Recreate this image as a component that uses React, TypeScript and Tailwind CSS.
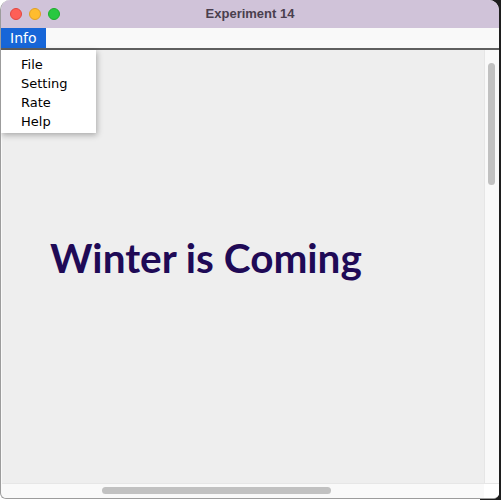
import React from 'react';

const menuItems = ['File', 'Setting', 'Rate', 'Help'];

const TrafficLights: React.FC = () => (
  <div className="flex items-center gap-[7px] pl-[9px]">
    <span className="w-[12px] h-[12px] rounded-full bg-[#fe5f57] border border-[#e2463f]" />
    <span className="w-[12px] h-[12px] rounded-full bg-[#febc2e] border border-[#dfa023]" />
    <span className="w-[12px] h-[12px] rounded-full bg-[#28c840] border border-[#1dad2b]" />
  </div>
);

const App: React.FC = () => {
  return (
    <div className="w-[501px] h-[500px] flex bg-[linear-gradient(to_right,#ffffff_480px,#1e1e1e_480px)] font-['Liberation_Sans',sans-serif]">
      <div className="relative w-[499px] h-[499px] flex flex-col rounded-t-[10px] rounded-b-[6px] overflow-hidden border-l border-b border-[#9c9c9c] bg-[#f9f9f9]">
        {/* title bar */}
        <div className="relative h-[28px] shrink-0 bg-[#d0c3d9] flex items-center">
          <TrafficLights />
          <span className="absolute left-0 right-0 text-center text-[13px] font-bold text-[#4a3f4e]">
            Experiment 14
          </span>
        </div>

        {/* menu bar */}
        <div className="h-[22px] shrink-0 flex bg-[#f9f9f9] border-b-2 border-[#5f5f5f]">
          <div className="w-[45px] bg-[#1766d8] text-white text-[14px] pl-[9px] leading-[20px] font-['DejaVu_Sans',sans-serif]">
            Info
          </div>
        </div>

        {/* scroll pane */}
        <div className="flex-1 flex flex-col min-h-0 pl-[1px]">
          <div className="flex-1 flex min-h-0">
            <div className="flex-1 bg-[#eeeeee] pl-[48px] pt-[184px]">
              <h1 className="text-[40.5px] font-bold text-[#1f0a56] font-['Lato',sans-serif] leading-[48px]">
                Winter is Coming
              </h1>
            </div>
            <div className="w-[15px] bg-[#f9f9f9] border-l border-[#e6e6e6] pt-[13px] pl-[3px]">
              <div className="w-[7px] h-[122px] rounded-full bg-[#c1c1c1]" />
            </div>
          </div>
          <div className="h-[15px] shrink-0 flex border-t border-[#e6e6e6] bg-[#f9f9f9]">
            <div className="flex-1 pt-[3px] pl-[100px]">
              <div className="w-[229px] h-[7px] rounded-full bg-[#c1c1c1]" />
            </div>
            <div className="w-[15px] bg-white" />
          </div>
        </div>

        {/* dropdown */}
        <div className="absolute top-[50px] left-0 w-[95px] h-[83px] bg-white shadow-[1px_2px_6px_rgba(0,0,0,0.3)] pt-[5px] pl-[20px] font-['DejaVu_Sans',sans-serif] text-[13px] leading-[19px] text-black">
          {menuItems.map((item) => (
            <div key={item}>{item}</div>
          ))}
        </div>
      </div>
      <div className="w-[2px] bg-[#1e1e1e]" />
    </div>
  );
};

export default App;
